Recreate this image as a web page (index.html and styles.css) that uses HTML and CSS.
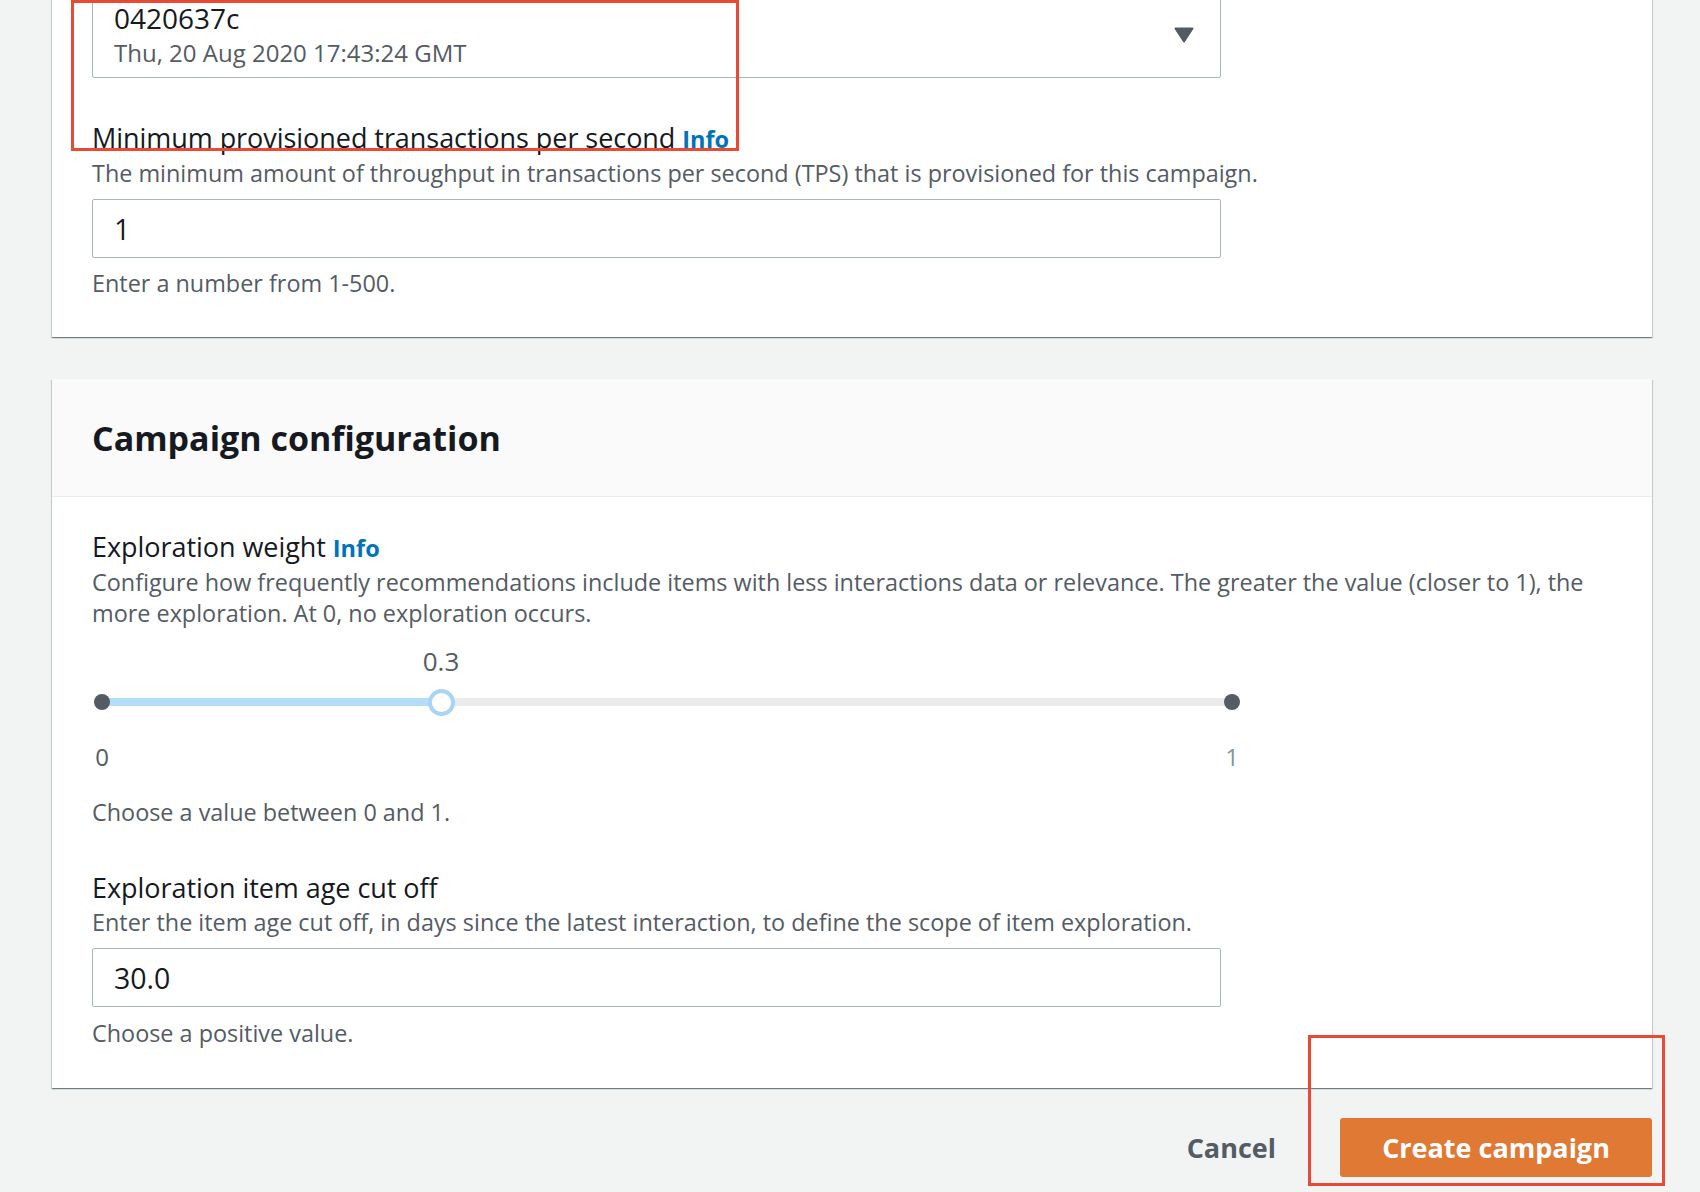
FILE: index.html
```html
<!DOCTYPE html>
<html lang="en">
<head>
<meta charset="utf-8">
<title>Create campaign</title>
<link rel="stylesheet" href="styles.css">
</head>
<body>
<div class="page">
  <section class="card card-first">
    <div class="field">
      <div class="select">
        <div class="select-text">
          <div class="select-main">0420637c</div>
          <div class="select-sub">Thu, 20 Aug 2020 17:43:24 GMT</div>
        </div>
        <svg class="select-arrow" width="20" height="16" viewBox="0 0 20 16" aria-hidden="true">
          <path d="M1.5 1.5 H18.5 L10 14.5 Z" fill="#545b64" stroke="#545b64" stroke-width="2" stroke-linejoin="round"/>
        </svg>
      </div>
    </div>
    <div class="field field-spaced">
      <div class="label">Minimum provisioned transactions per second <a class="info">Info</a></div>
      <div class="desc">The minimum amount of throughput in transactions per second (TPS) that is provisioned for this campaign.</div>
      <div class="input">1</div>
      <div class="hint hint-first">Enter a number from 1-500.</div>
    </div>
  </section>

  <section class="card card-second">
    <header class="card-header">
      <h2 class="card-title">Campaign configuration</h2>
    </header>
    <div class="card-body">
      <div class="field">
        <div class="label">Exploration weight <a class="info">Info</a></div>
        <div class="desc">Configure how frequently recommendations include items with less interactions data or relevance. The greater the value (closer to 1), the more exploration. At 0, no exploration occurs.</div>
        <div class="slider">
          <div class="slider-inner">
            <div class="slider-value-row">
              <span class="slider-value" style="left: 30%;">0.3</span>
            </div>
            <div class="slider-track-row">
              <div class="track">
                <div class="track-fill" style="width: 30%;"></div>
              </div>
              <span class="dot dot-start"></span>
              <span class="dot dot-end"></span>
              <span class="thumb" style="left: 30%;"></span>
            </div>
          </div>
          <div class="slider-ends">
            <span class="end end-min">0</span>
            <span class="end end-max">1</span>
          </div>
        </div>
        <div class="hint hint-slider">Choose a value between 0 and 1.</div>
      </div>
      <div class="field field-spaced2">
        <div class="label">Exploration item age cut off</div>
        <div class="desc">Enter the item age cut off, in days since the latest interaction, to define the scope of item exploration.</div>
        <div class="input">30.0</div>
        <div class="hint">Choose a positive value.</div>
      </div>
    </div>
  </section>

  <div class="actions">
    <a class="btn-link">Cancel</a>
    <a class="btn-primary">Create campaign</a>
  </div>
</div>

<div class="annot annot-one"></div>
<div class="annot annot-two"></div>
</body>
</html>
```

FILE: styles.css
```css
* { box-sizing: border-box; }

html, body {
  margin: 0;
  padding: 0;
}

body {
  background: #f2f3f3;
  font-family: "Open Sans", "Noto Sans", sans-serif;
  color: #16191f;
  width: 1700px;
  height: 1192px;
  overflow: hidden;
  position: relative;
}

.page {
  margin-top: -47px;
  padding-left: 52px;
  width: 1652px;
}

.card {
  background: #ffffff;
  box-shadow: 0 1px 1px 0 rgba(0, 28, 36, 0.4), 1px 1px 1px 0 rgba(0, 28, 36, 0.12), -1px 1px 1px 0 rgba(0, 28, 36, 0.12);
  width: 1600px;
}

.card-first {
  padding: 40px 40px 37px 40px;
}

.card-second {
  margin-top: 42px;
}

.card-header {
  background: #fafafa;
  border-bottom: 1px solid #eaeded;
  padding: 37px 40px 36px 40px;
}

.card-title {
  margin: 0;
  font-size: 34px;
  line-height: 44px;
  font-weight: 700;
  color: #16191f;
}

.card-body {
  padding: 31px 40px 39px 40px;
}

.field-spaced { margin-top: 41px; }
.field-spaced2 { margin-top: 41px; }

.select {
  width: 1129px;
  border: 1px solid #aab7b8;
  border-radius: 2px;
  padding: 6px 26px 7px 21px;
  display: flex;
  align-items: center;
  justify-content: space-between;
}

.select-main {
  font-size: 28px;
  line-height: 36px;
  color: #16191f;
}

.select-sub {
  font-size: 24px;
  line-height: 34px;
  color: #545b64;
}

.select-arrow { display: block; }

.label {
  font-size: 27px;
  line-height: 38px;
  letter-spacing: -0.05px;
  color: #16191f;
}

.info {
  color: #0073bb;
  font-weight: 700;
  font-size: 23.5px;
  letter-spacing: 0;
  text-decoration: none;
}

.desc {
  font-size: 23.4px;
  line-height: 31px;
  color: #545b64;
  max-width: 1520px;
}

.input {
  margin-top: 10px;
  width: 1129px;
  height: 59px;
  border: 1px solid #aab7b8;
  border-radius: 2px;
  padding: 0 21px;
  display: flex;
  align-items: center;
  font-size: 28.5px;
  color: #16191f;
}

.hint {
  margin-top: 11px;
  font-size: 23.4px;
  line-height: 31px;
  color: #545b64;
}

.hint-first { margin-top: 10px; }
.hint-slider { margin-top: 25px; }

.card-first .hint-first { margin-bottom: 1px; }

/* slider */
.slider {
  width: 1150px;
  margin-top: 18px;
}

.slider-inner {
  margin: 0 10px;
  position: relative;
}

.slider-value-row {
  position: relative;
  height: 32px;
}

.slider-value {
  position: absolute;
  top: -2px;
  transform: translateX(-50%);
  font-size: 26px;
  line-height: 32px;
  color: #545b64;
}

.slider-track-row {
  position: relative;
  height: 46px;
  display: flex;
  align-items: center;
}

.track {
  width: 100%;
  height: 8px;
  background: #e9ebed;
  display: flex;
}

.track-fill {
  height: 100%;
  background: #b4def7;
}

.dot {
  position: absolute;
  top: 50%;
  width: 16px;
  height: 16px;
  margin-top: -8px;
  margin-left: -8px;
  border-radius: 50%;
  background: #545b64;
}

.dot-start { left: 0; }
.dot-end { left: 100%; }

.thumb {
  position: absolute;
  top: 50%;
  width: 27px;
  height: 27px;
  margin-top: -13.5px;
  margin-left: -13.5px;
  border-radius: 50%;
  background: #ffffff;
  border: 4px solid #a8d5f4;
}

.slider-ends {
  margin-top: 16px;
  display: flex;
  justify-content: space-between;
}

.end {
  width: 20px;
  text-align: center;
  font-size: 24px;
  line-height: 31px;
}

.end-min { color: #545b64; }
.end-max { color: #879596; }

/* actions */
.actions {
  margin-top: 30px;
  display: flex;
  justify-content: flex-end;
  align-items: center;
  gap: 64px;
  width: 1600px;
}

.btn-link {
  font-size: 27px;
  font-weight: 700;
  color: #545b64;
  text-decoration: none;
}

.btn-primary {
  height: 59px;
  width: 312px;
  display: flex;
  align-items: center;
  justify-content: center;
  background: #df7934;
  border-radius: 3px;
  color: #ffffff;
  font-size: 27px;
  font-weight: 700;
  text-decoration: none;
}

/* annotation overlays */
.annot {
  position: absolute;
  border: 3px solid #ea4a33;
}

.annot-one {
  left: 71px;
  top: 0;
  width: 668px;
  height: 151px;
}

.annot-two {
  left: 1308px;
  top: 1035px;
  width: 357px;
  height: 151px;
}
```
